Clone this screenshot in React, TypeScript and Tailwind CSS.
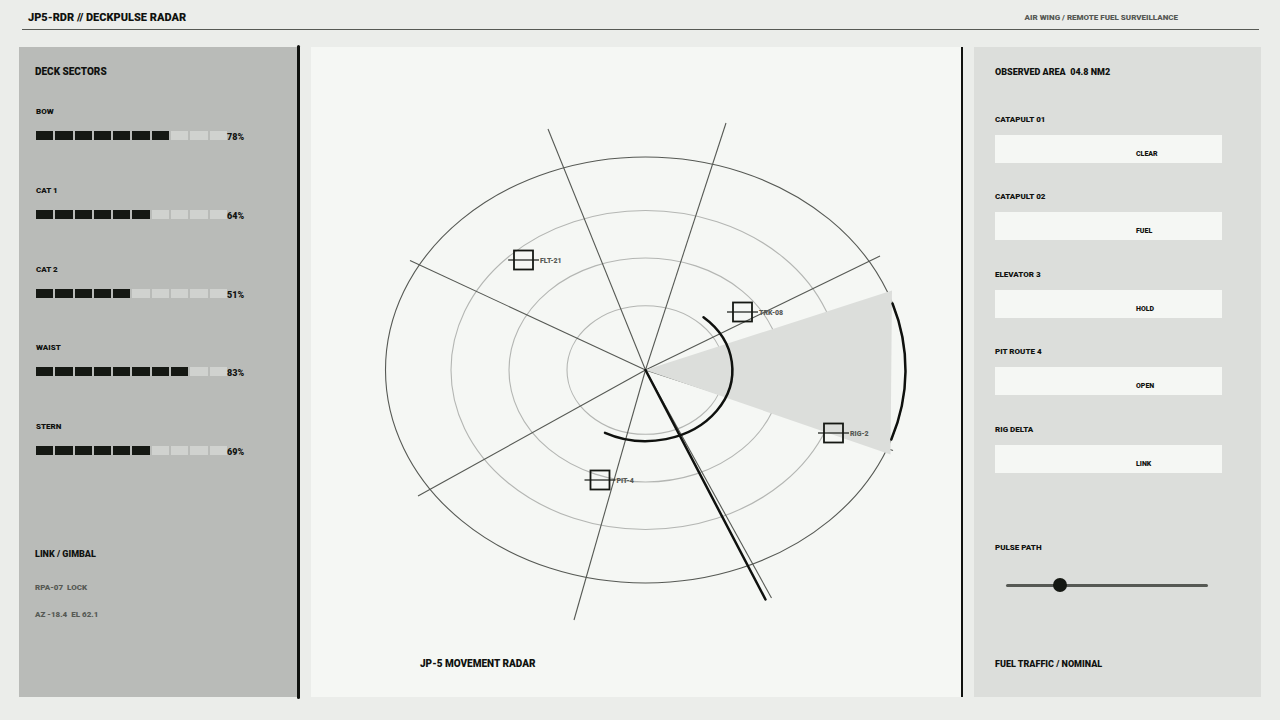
const sectors = [
  { name: "BOW", value: 78, filled: 7 },
  { name: "CAT 1", value: 64, filled: 6 },
  { name: "CAT 2", value: 51, filled: 5 },
  { name: "WAIST", value: 83, filled: 8 },
  { name: "STERN", value: 69, filled: 6 },
];

const stations = [
  { name: "CATAPULT 01", status: "CLEAR" },
  { name: "CATAPULT 02", status: "FUEL" },
  { name: "ELEVATOR 3", status: "HOLD" },
  { name: "PIT ROUTE 4", status: "OPEN" },
  { name: "RIG DELTA", status: "LINK" },
];

// Radar coordinates are relative to the centre of the scope
const rings = [
  { rx: 194.5, ry: 159.5 },
  { rx: 136.5, ry: 112 },
  { rx: 78.5, ry: 64.3 },
];

const spokes = [
  [-97.5, -241],
  [80.5, -247],
  [234.5, -114],
  [247.5, 80.5],
  [126, 228],
  [-71.5, 250],
  [-227.5, 126],
  [-235.5, -109.5],
];

const contacts = [
  { id: "FLT-21", x: -122, y: -110 },
  { id: "TRK-08", x: 97, y: -58 },
  { id: "RIG-2", x: 188, y: 63 },
  { id: "PIT-4", x: -45.5, y: 110 },
];

function SectorBar({ name, value, filled }: { name: string; value: number; filled: number }) {
  return (
    <li className="pl-px">
      <p className="text-[8px] leading-3">{name}</p>
      <div className="mt-[13px] flex items-start">
        <div
          role="meter"
          aria-label={name}
          aria-valuenow={value}
          aria-valuemin={0}
          aria-valuemax={100}
          className="flex h-[9px] w-[191px] gap-[2px]"
        >
          {Array.from({ length: 10 }, (_, i) => (
            <span key={i} className={i < filled ? "flex-1 bg-[#151813]" : "flex-1 bg-[#d0d2cf]"} />
          ))}
        </div>
        <span className="text-[9px] leading-3">{value}%</span>
      </div>
    </li>
  );
}

function Radar() {
  return (
    <svg viewBox="-334.5 -323 650 590" className="block w-full" role="img" aria-label="JP-5 movement radar">
      <g fill="none" stroke="#b4b6b3" strokeWidth="1.1">
        {rings.map((r) => (
          <ellipse key={r.rx} rx={r.rx} ry={r.ry} />
        ))}
      </g>
      <g fill="none" stroke="#565954" strokeWidth="1.1">
        <ellipse rx="260" ry="213" />
        {spokes.map(([x, y]) => (
          <line key={x} x1="0" y1="0" x2={x} y2={y} />
        ))}
      </g>

      {/* Watched sector */}
      <path d="M0 0 L246.5 -79.5 L245 84.5 Z" fill="#dcdedb" />
      <g fill="none" stroke="#0f110e" strokeWidth="2.5" strokeLinecap="round">
        <path d="M247 -66.5 A260 213 0 0 1 245.8 69.5" />
        <path d="M58 -52.8 A86.7 71 0 0 1 -40.5 62.8" />
        <line x1="0" y1="0" x2="120" y2="229.5" />
      </g>

      {/* Contacts */}
      {contacts.map((c) => (
        <g key={c.id} transform={`translate(${c.x} ${c.y})`}>
          <rect x="-9.5" y="-9.5" width="19" height="19" fill="none" stroke="#151813" strokeWidth="1.8" />
          <line x1="-15.5" x2="15.5" y1="0" y2="0" stroke="#151813" strokeWidth="1.2" />
          <text x="16.5" y="3" fontSize="7" fill="#565954">
            {c.id}
          </text>
        </g>
      ))}
    </svg>
  );
}

export default function App() {
  return (
    <div className="flex min-h-screen flex-col bg-[#ebedea] pb-[23px] font-['Roboto',sans-serif] font-black text-[#10120f]">
      <header className="ml-[22px] mr-[21px] flex items-center justify-between border-b border-[#565954] pt-[10px] pb-[3px] pl-1.5 pr-[81px]">
        <h1 className="text-[11px] leading-4">JP5-RDR // DECKPULSE RADAR</h1>
        <p className="text-[8px] leading-4 text-[#565954]">AIR WING / REMOTE FUEL SURVEILLANCE</p>
      </header>

      <main className="mx-[19px] mt-[17px] grid flex-1 grid-cols-[281px_minmax(0,1fr)_287px] gap-[11px]">
        {/* Deck sectors */}
        <section className="flex">
          <div className="flex-1 bg-[#b9bbb8] px-4 pt-[17px]">
            <h2 className="text-[10px] leading-4">DECK SECTORS</h2>
            <ul className="mt-[26px] grid min-h-[394px] grid-rows-5">
              {sectors.map((s) => (
                <SectorBar key={s.name} {...s} />
              ))}
            </ul>
            <h2 className="mt-[46px] text-[9px] leading-4">LINK / GIMBAL</h2>
            <p className="mt-5 whitespace-pre text-[8px] leading-3 text-[#565954]">{"RPA-07  LOCK"}</p>
            <p className="mt-[15px] whitespace-pre text-[8px] leading-3 text-[#565954]">{"AZ -18.4  EL 62.1"}</p>
          </div>
          <div className="-my-0.5 w-[3px] rounded-full bg-[#10120f]" />
        </section>

        {/* Radar scope */}
        <section className="border-r-2 border-[#10120f] bg-[#f5f7f4]">
          <Radar />
          <h2 className="mt-[19px] pl-[109px] text-[10px] leading-4">JP-5 MOVEMENT RADAR</h2>
        </section>

        {/* Observed area */}
        <section className="bg-[#dcdedb] px-[21px] pt-[17px]">
          <h2 className="whitespace-pre text-[9px] leading-4">{"OBSERVED AREA  04.8 NM2"}</h2>
          <ul className="mt-[34px] grid min-h-[387px] grid-rows-5">
            {stations.map((s) => (
              <li key={s.name}>
                <p className="text-[8px] leading-3">{s.name}</p>
                <div className="mt-[9px] flex h-7 w-[227px] items-end bg-[#f5f7f4] pb-[3px] pl-[141px]">
                  <span className="text-[7px] leading-3">{s.status}</span>
                </div>
              </li>
            ))}
          </ul>
          <label htmlFor="pulse" className="mt-[41px] block text-[8px] leading-3">
            PULSE PATH
          </label>
          <input
            id="pulse"
            type="range"
            min={0}
            max={100}
            defaultValue={25}
            className="mt-[30px] ml-[11px] block h-[3px] w-[202px] appearance-none rounded-full bg-[#565954] [&::-webkit-slider-runnable-track]:h-[3px] [&::-webkit-slider-thumb]:-mt-1.5 [&::-webkit-slider-thumb]:size-[14px] [&::-webkit-slider-thumb]:appearance-none [&::-webkit-slider-thumb]:rounded-full [&::-webkit-slider-thumb]:bg-[#151813]"
          />
          <p className="mt-[69px] text-[9px] leading-4">FUEL TRAFFIC / NOMINAL</p>
        </section>
      </main>
    </div>
  );
}
